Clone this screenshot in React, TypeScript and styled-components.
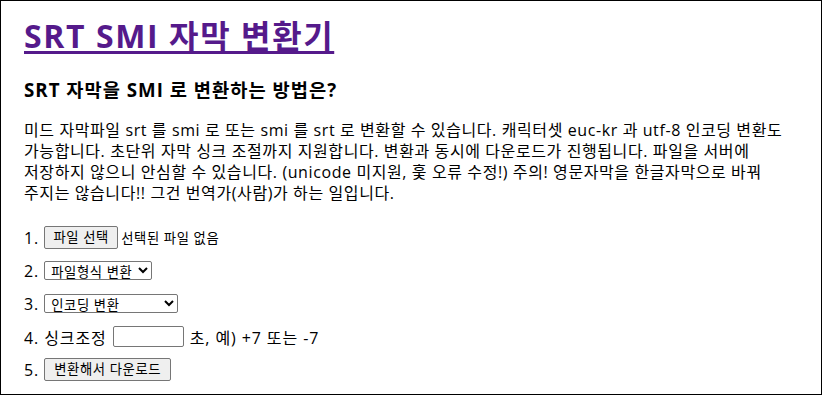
import React, { useState } from 'react';
import styled, { createGlobalStyle } from 'styled-components';

const GlobalStyle = createGlobalStyle`
  html, body {
    margin: 0;
    padding: 0;
    background: #fff;
  }
  body {
    font-family: "Open Sans", "Noto Sans CJK KR", sans-serif;
    color: #000;
  }
`;

const Page = styled.div`
  box-sizing: border-box;
  width: 822px;
  height: 395px;
  border: 1px solid #000;
  padding: 0 23px;
  overflow: hidden;
`;

const Title = styled.h1`
  margin: 15px 0 0;
  font-size: 32px;
  line-height: 40px;
  font-weight: 700;
  letter-spacing: 1.6px;

  a {
    color: #551a8b;
    text-decoration: underline;
    text-decoration-thickness: 3px;
    text-underline-offset: 3px;
  }
`;

const SubTitle = styled.h3`
  margin: 22px 0 0;
  font-size: 18.72px;
  line-height: 24px;
  font-weight: 700;
  letter-spacing: 1px;
`;

const Intro = styled.p`
  margin: 18px 0 0;
  font-size: 16px;
  line-height: 21px;
  letter-spacing: 0.6px;
  white-space: nowrap;
`;

const Steps = styled.div`
  margin-top: 22px;
  display: flex;
  flex-direction: column;
  gap: 10px;
`;

const Step = styled.div`
  display: flex;
  align-items: center;
  gap: 5px;
  height: 23px;
  font-size: 16px;
  letter-spacing: 0.9px;
`;

const controlFont = `
  font-family: "Open Sans", "Noto Sans CJK KR", sans-serif;
  font-size: 13.33px;
  letter-spacing: 0.6px;
  color: #000;
`;

const Button = styled.button<{ $width: number }>`
  ${controlFont}
  box-sizing: border-box;
  width: ${({ $width }) => $width}px;
  height: 23px;
  padding: 0 6px;
  background: #efefef;
  border: 1px solid #767676;
  border-radius: 2px;
  line-height: 1;
  cursor: pointer;
`;

const FileNote = styled.span`
  ${controlFont}
  margin-left: -2px;
`;

const Select = styled.select<{ $width: number }>`
  ${controlFont}
  box-sizing: border-box;
  width: ${({ $width }) => $width}px;
  height: 19px;
  padding: 0 0 0 2px;
  border: 1px solid #767676;
  border-radius: 2px;
  background: #fff;
`;

const TextInput = styled.input`
  ${controlFont}
  box-sizing: border-box;
  width: 71px;
  height: 21px;
  margin: 0 1px;
  padding: 1px 2px;
  border: 1px solid #767676;
  border-radius: 2px;
`;

const App = () => {
  const [format, setFormat] = useState('');
  const [encoding, setEncoding] = useState('');
  const [sync, setSync] = useState('');

  return (
    <>
      <GlobalStyle />
      <Page>
        <Title>
          <a href="#top">SRT SMI 자막 변환기</a>
        </Title>
        <SubTitle>SRT 자막을 SMI 로 변환하는 방법은?</SubTitle>
        <Intro>
          미드 자막파일 srt 를 smi 로 또는 smi 를 srt 로 변환할 수 있습니다. 캐릭터셋 euc-kr 과 utf-8 인코딩 변환도
          <br />
          가능합니다. 초단위 자막 싱크 조절까지 지원합니다. 변환과 동시에 다운로드가 진행됩니다. 파일을 서버에
          <br />
          저장하지 않으니 안심할 수 있습니다. (unicode 미지원, 훛 오류 수정!) 주의! 영문자막을 한글자막으로 바꿔
          <br />
          주지는 않습니다!! 그건 번역가(사람)가 하는 일입니다.
        </Intro>
        <Steps>
          <Step>
            <span>1.</span>
            <Button type="button" $width={74}>파일 선택</Button>
            <FileNote>선택된 파일 없음</FileNote>
          </Step>
          <Step>
            <span>2.</span>
            <Select $width={108} value={format} onChange={(e) => setFormat(e.target.value)}>
              <option value="">파일형식 변환</option>
              <option value="srt2smi">SRT → SMI</option>
              <option value="smi2srt">SMI → SRT</option>
            </Select>
          </Step>
          <Step>
            <span>3.</span>
            <Select $width={134} value={encoding} onChange={(e) => setEncoding(e.target.value)}>
              <option value="">인코딩 변환</option>
              <option value="euckr">euc-kr</option>
              <option value="utf8">utf-8</option>
            </Select>
          </Step>
          <Step>
            <span>4. 싱크조정</span>
            <TextInput type="text" value={sync} onChange={(e) => setSync(e.target.value)} />
            <span>초, 예) +7 또는 -7</span>
          </Step>
          <Step>
            <span>5.</span>
            <Button type="button" $width={127}>변환해서 다운로드</Button>
          </Step>
        </Steps>
      </Page>
    </>
  );
};

export default App;
